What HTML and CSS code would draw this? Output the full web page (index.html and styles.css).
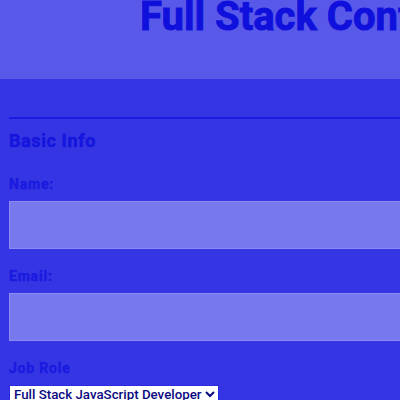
FILE: index.html
```html
<!DOCTYPE html>
<html>
<head>
<meta charset="utf-8">
<link rel="stylesheet" href="styles.css">
</head>
<body>
<header class="page-header">
  <h1 class="title">Full Stack Conf</h1>
</header>
<main class="content">
  <form class="form">
    <fieldset class="section">
      <h2 class="section-title">Basic Info</h2>
      <label class="label" for="name">Name:</label>
      <input class="field" type="text" id="name">
      <label class="label" for="mail">Email:</label>
      <input class="field" type="email" id="mail">
      <label class="label" for="title">Job Role</label>
      <select class="select" id="title">
        <option>Full Stack JavaScript Developer</option>
      </select>
    </fieldset>
  </form>
</main>
</body>
</html>
```
FILE: styles.css
```css
html, body {
  margin: 0;
  padding: 0;
  background: #3535e3;
  font-family: Roboto, "Liberation Sans", sans-serif;
  overflow: hidden;
}
.page-header {
  background: #5858e9;
  height: 79px;
  padding-left: 140px;
  box-sizing: border-box;
  overflow: hidden;
}
.title {
  margin: 0;
  font-size: 40px;
  line-height: 34px;
  font-weight: 700;
  color: #1010dc;
  -webkit-text-stroke: 1px #1010dc;
  white-space: nowrap;
  text-shadow: 0 0 1.5px #8080f0;
}
.content {
  padding: 38px 0 0 9px;
}
.section {
  margin: 0;
  padding: 0;
  border: 0;
  border-top: 2px solid #1c1ce0;
  display: flex;
  flex-direction: column;
  align-items: flex-start;
}
.section-title {
  margin: 10px 0 0;
  font-size: 18px;
  line-height: 24px;
  font-weight: 700;
  letter-spacing: 0.6px;
  color: #1515dd;
  -webkit-text-stroke: 0.5px #1515dd;
}
.label {
  margin-top: 21px;
  font-size: 14px;
  font-weight: 700;
  line-height: 20px;
  letter-spacing: 0.8px;
  color: #1a1ae0;
  -webkit-text-stroke: 0.4px #1a1ae0;
}
.field {
  margin-top: 7px;
  width: 420px;
  height: 48px;
  box-sizing: border-box;
  background: #7777ee;
  border: 1px solid #8a8af2;
  border-radius: 0;
}
.field + .label {
  margin-top: 17px;
}
.select {
  margin-top: 7px;
  font-family: Roboto, sans-serif;
  font-size: 13.3px;
  font-weight: 500;
  color: #0a0a80;
  background: #fff;
  border: 1px solid #2a2ae0;
}
```
